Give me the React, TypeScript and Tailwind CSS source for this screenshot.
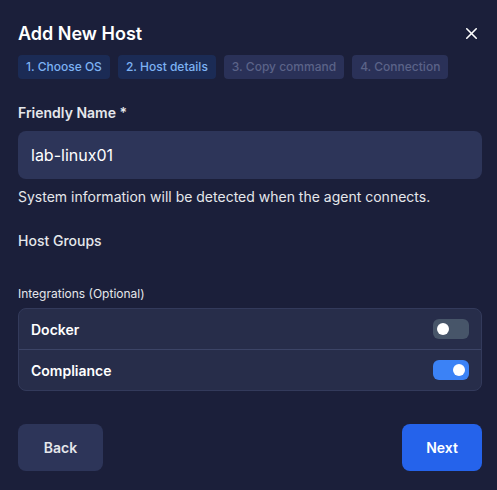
import { X } from "lucide-react";

const steps = [
  { label: "1. Choose OS", active: true },
  { label: "2. Host details", active: true },
  { label: "3. Copy command", active: false },
  { label: "4. Connection", active: false },
];

function Toggle({ on }: { on: boolean }) {
  return (
    <div
      className={
        on
          ? "w-[36px] h-[20px] rounded-[6px] bg-[#3b82f6] flex items-center justify-end px-[4px]"
          : "w-[36px] h-[20px] rounded-[6px] bg-[#475569] flex items-center justify-start px-[4px]"
      }
    >
      <span className="w-[12px] h-[12px] rounded-full bg-white" />
    </div>
  );
}

export default function App() {
  return (
    <div className="w-[497px] h-[490px] bg-[#1b1f3a] text-[#e5e7eb] font-['Inter',sans-serif] pl-[18px] pr-[15px] pt-[22px]">
      <div className="flex items-center justify-between h-[22px]">
        <h1 className="text-[18px] font-semibold text-white">Add New Host</h1>
        <X className="w-[19px] h-[19px] text-white mr-[1px]" strokeWidth={2} />
      </div>

      <div className="flex gap-[8px] mt-[11px]">
        {steps.map((s) => (
          <span
            key={s.label}
            className={
              s.active
                ? "h-[24px] px-[8px] rounded-[4px] bg-[#1b2b55] text-[#7db2f3] text-[12px] font-medium flex items-center"
                : "h-[24px] px-[8px] rounded-[4px] bg-[#2a3158] text-[#5b6388] text-[12px] font-medium flex items-center"
            }
          >
            {s.label}
          </span>
        ))}
      </div>

      <label className="block mt-[24px] text-[14px] font-semibold text-[#e5e7eb] leading-[20px]">
        Friendly Name *
      </label>
      <div className="mt-[8px] h-[48px] rounded-[8px] bg-[#2d3559] flex items-center px-[13px] text-[16px] text-white">
        lab-linux01
      </div>
      <p className="mt-[8px] text-[14px] leading-[20px] text-[#e5e7eb]">
        System information will be detected when the agent connects.
      </p>

      <p className="mt-[24px] text-[14px] leading-[20px] font-medium text-[#e5e7eb]">Host Groups</p>

      <p className="mt-[35px] text-[12px] leading-[16px] text-[#e5e7eb]">Integrations (Optional)</p>

      <div className="mt-[6px] rounded-[8px] bg-[#272d4a] border border-[#333a5b]">
        <div className="h-[41px] flex items-center justify-between pl-[12px] pr-[12px] border-b border-[#3c4466]">
          <span className="text-[14px] font-semibold text-white">Docker</span>
          <Toggle on={false} />
        </div>
        <div className="h-[40px] flex items-center justify-between pl-[12px] pr-[12px]">
          <span className="text-[14px] font-semibold text-white">Compliance</span>
          <Toggle on={true} />
        </div>
      </div>

      <div className="flex justify-between mt-[33px]">
        <button className="w-[85px] h-[47px] rounded-[8px] bg-[#2d3559] text-[14px] font-semibold text-[#e5e7eb]">
          Back
        </button>
        <button className="w-[80px] h-[47px] rounded-[8px] bg-[#2563eb] text-[14px] font-semibold text-white">
          Next
        </button>
      </div>
    </div>
  );
}
